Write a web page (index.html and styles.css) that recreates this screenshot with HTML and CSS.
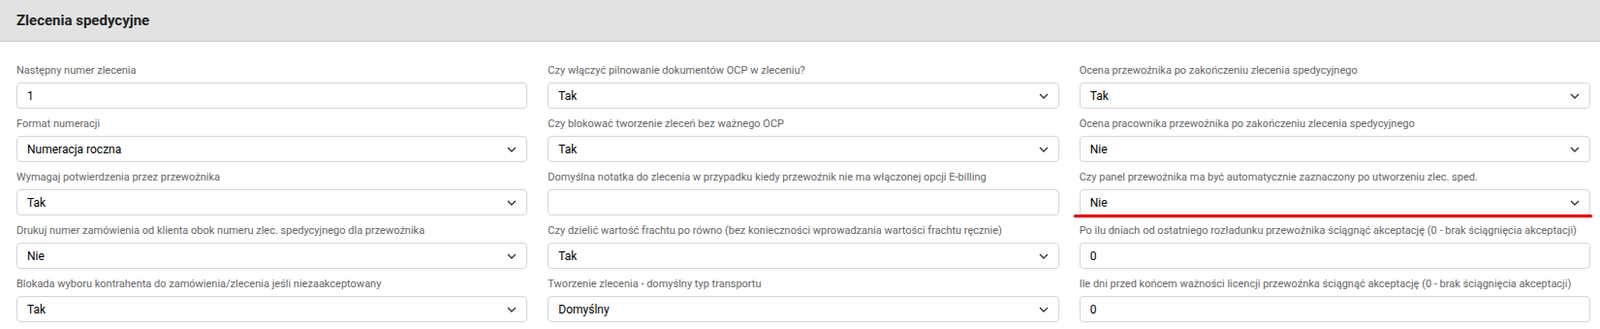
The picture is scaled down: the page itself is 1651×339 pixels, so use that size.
FILE: index.html
```html
<!DOCTYPE html>
<html lang="pl">
<head>
    <meta charset="UTF-8">
    <meta name="viewport" content="width=device-width, initial-scale=1.0">
    <title>Zlecenia spedycyjne</title>
    <link rel="stylesheet" href="styles.css">
</head>
<body>
    <div class="panel">
        <div class="panel-header">
            <h2>Zlecenia spedycyjne</h2>
        </div>
        <div class="panel-body">
            <!-- kolumna 1 -->
            <div class="column">
                <div class="field">
                    <label for="nr">Następny numer zlecenia</label>
                    <input type="text" id="nr" value="1">
                </div>
                <div class="field">
                    <label for="format">Format numeracji</label>
                    <div class="select-wrap">
                        <select id="format"><option>Numeracja roczna</option><option>Numeracja miesięczna</option></select>
                        <svg class="chevron" width="10" height="6" viewBox="0 0 10 6"><polyline points="1,1 5,5 9,1"/></svg>
                    </div>
                </div>
                <div class="field">
                    <label for="potw">Wymagaj potwierdzenia przez przewoźnika</label>
                    <div class="select-wrap">
                        <select id="potw"><option>Tak</option><option>Nie</option></select>
                        <svg class="chevron" width="10" height="6" viewBox="0 0 10 6"><polyline points="1,1 5,5 9,1"/></svg>
                    </div>
                </div>
                <div class="field">
                    <label for="drukuj">Drukuj numer zamówienia od klienta obok numeru zlec. spedycyjnego dla przewoźnika</label>
                    <div class="select-wrap">
                        <select id="drukuj"><option>Nie</option><option>Tak</option></select>
                        <svg class="chevron" width="10" height="6" viewBox="0 0 10 6"><polyline points="1,1 5,5 9,1"/></svg>
                    </div>
                </div>
                <div class="field">
                    <label for="blokada">Blokada wyboru kontrahenta do zamówienia/zlecenia jeśli niezaakceptowany</label>
                    <div class="select-wrap">
                        <select id="blokada"><option>Tak</option><option>Nie</option></select>
                        <svg class="chevron" width="10" height="6" viewBox="0 0 10 6"><polyline points="1,1 5,5 9,1"/></svg>
                    </div>
                </div>
            </div>

            <!-- kolumna 2 -->
            <div class="column">
                <div class="field">
                    <label for="ocp">Czy włączyć pilnowanie dokumentów OCP w zleceniu?</label>
                    <div class="select-wrap">
                        <select id="ocp"><option>Tak</option><option>Nie</option></select>
                        <svg class="chevron" width="10" height="6" viewBox="0 0 10 6"><polyline points="1,1 5,5 9,1"/></svg>
                    </div>
                </div>
                <div class="field">
                    <label for="blokuj">Czy blokować tworzenie zleceń bez ważnego OCP</label>
                    <div class="select-wrap">
                        <select id="blokuj"><option>Tak</option><option>Nie</option></select>
                        <svg class="chevron" width="10" height="6" viewBox="0 0 10 6"><polyline points="1,1 5,5 9,1"/></svg>
                    </div>
                </div>
                <div class="field">
                    <label for="notatka">Domyślna notatka do zlecenia w przypadku kiedy przewoźnik nie ma włączonej opcji E-billing</label>
                    <input type="text" id="notatka" value="">
                </div>
                <div class="field">
                    <label for="fracht">Czy dzielić wartość frachtu po równo (bez konieczności wprowadzania wartości frachtu ręcznie)</label>
                    <div class="select-wrap">
                        <select id="fracht"><option>Tak</option><option>Nie</option></select>
                        <svg class="chevron" width="10" height="6" viewBox="0 0 10 6"><polyline points="1,1 5,5 9,1"/></svg>
                    </div>
                </div>
                <div class="field">
                    <label for="transport">Tworzenie zlecenia - domyślny typ transportu</label>
                    <div class="select-wrap">
                        <select id="transport"><option>Domyślny</option></select>
                        <svg class="chevron" width="10" height="6" viewBox="0 0 10 6"><polyline points="1,1 5,5 9,1"/></svg>
                    </div>
                </div>
            </div>

            <!-- kolumna 3 -->
            <div class="column">
                <div class="field">
                    <label for="ocena">Ocena przewoźnika po zakończeniu zlecenia spedycyjnego</label>
                    <div class="select-wrap">
                        <select id="ocena"><option>Tak</option><option>Nie</option></select>
                        <svg class="chevron" width="10" height="6" viewBox="0 0 10 6"><polyline points="1,1 5,5 9,1"/></svg>
                    </div>
                </div>
                <div class="field">
                    <label for="ocenaPrac">Ocena pracownika przewoźnika po zakończeniu zlecenia spedycyjnego</label>
                    <div class="select-wrap">
                        <select id="ocenaPrac"><option>Nie</option><option>Tak</option></select>
                        <svg class="chevron" width="10" height="6" viewBox="0 0 10 6"><polyline points="1,1 5,5 9,1"/></svg>
                    </div>
                </div>
                <div class="field">
                    <label for="panel">Czy panel przewoźnika ma być automatycznie zaznaczony po utworzeniu zlec. sped.</label>
                    <div class="select-wrap marked">
                        <select id="panel"><option>Nie</option><option>Tak</option></select>
                        <svg class="chevron" width="10" height="6" viewBox="0 0 10 6"><polyline points="1,1 5,5 9,1"/></svg>
                    </div>
                </div>
                <div class="field">
                    <label for="dni">Po ilu dniach od ostatniego rozładunku przewoźnika ściągnąć akceptację (0 - brak ściągnięcia akceptacji)</label>
                    <input type="text" id="dni" value="0">
                </div>
                <div class="field">
                    <label for="licencja">Ile dni przed końcem ważności licencji przewoźnka ściągnąć akceptację (0 - brak ściągnięcia akceptacji)</label>
                    <input type="text" id="licencja" value="0">
                </div>
            </div>
        </div>
    </div>
</body>
</html>
```

FILE: styles.css
```css
body {
    font-family: Roboto, "Liberation Sans", Arial, sans-serif;
    background-color: #fff;
    margin: 0;
    color: #111;
}

.panel-header {
    background-color: #e2e2e2;
    border-bottom: 1px solid #c9c9c9;
    height: 42px;
    padding: 0 17px;
    display: flex;
    align-items: center;
}

.panel-header h2 {
    margin: 0;
    font-size: 15px;
    font-weight: 700;
    color: #222;
}

.panel-body {
    display: grid;
    grid-template-columns: repeat(3, 1fr);
    column-gap: 21px;
    padding: 22px 10px 0 17px;
}

.column {
    display: flex;
    flex-direction: column;
    gap: 8px;
}

.field label {
    display: block;
    font-size: 11px;
    line-height: 16px;
    color: #666;
    margin-bottom: 4px;
    white-space: nowrap;
}

.field input,
.field select {
    display: block;
    width: 100%;
    box-sizing: border-box;
    height: 27px;
    padding: 0 10px;
    border: 1px solid #d4d4da;
    border-radius: 4px;
    background-color: #fff;
    font-family: inherit;
    font-size: 12px;
    color: #000;
    outline: none;
}

.field select {
    appearance: none;
    -webkit-appearance: none;
    padding-right: 30px;
}

.select-wrap {
    position: relative;
}

.chevron {
    position: absolute;
    right: 11px;
    top: 11px;
    pointer-events: none;
}

.chevron polyline {
    fill: none;
    stroke: #333;
    stroke-width: 1.4;
}

/* czerwone podkreślenie */
.select-wrap.marked::after {
    content: "";
    position: absolute;
    left: -6px;
    right: -2px;
    bottom: -2px;
    height: 3px;
    border-radius: 2px;
    background-color: #e8000b;
    box-shadow: 0 1px 2px rgba(0, 0, 0, 0.25);
}
```
